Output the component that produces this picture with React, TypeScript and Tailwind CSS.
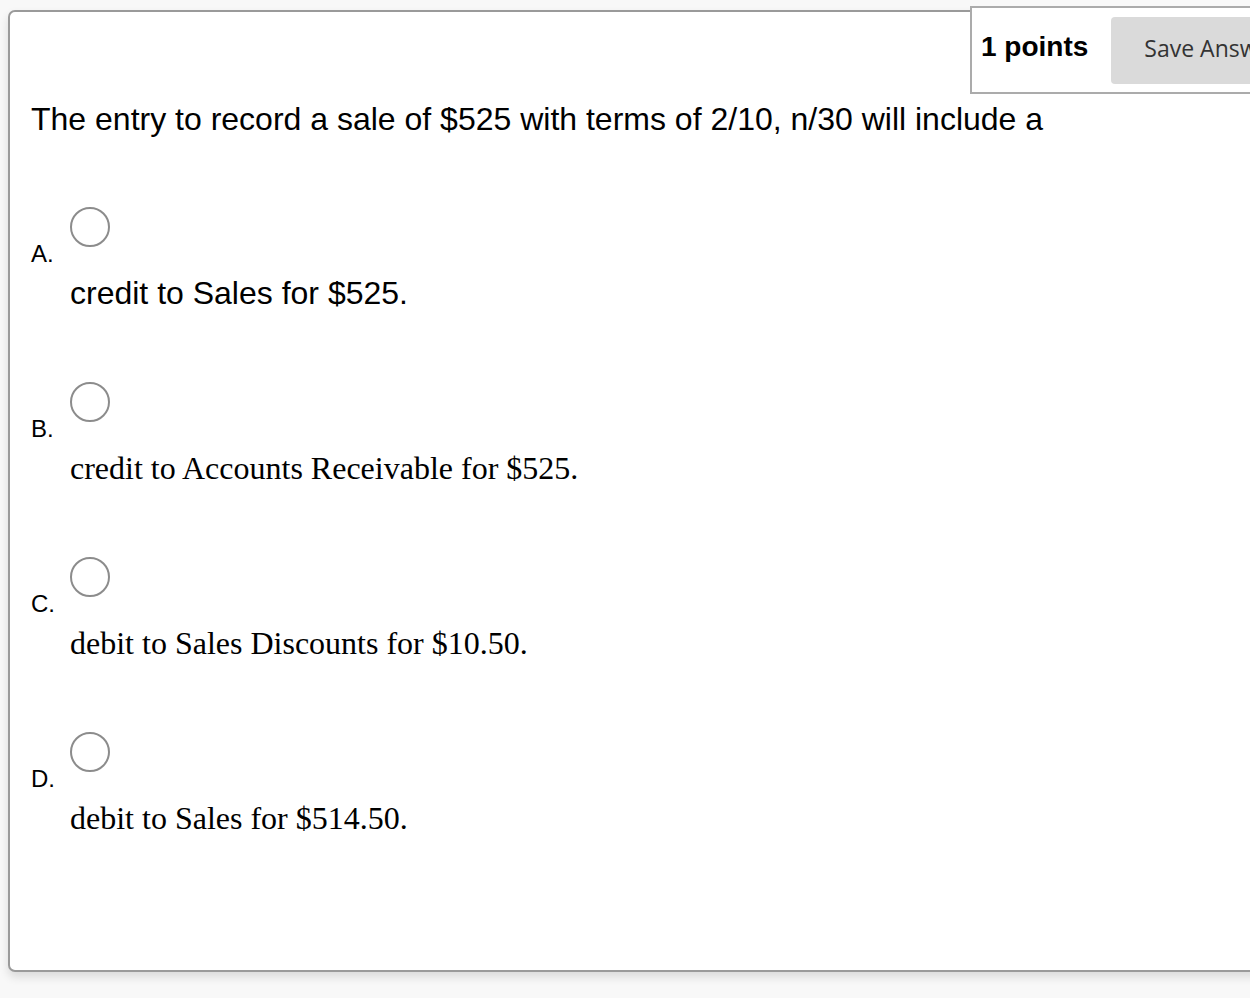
import React from "react";

type Option = {
  letter: string;
  text: string;
  serif?: boolean;
};

const OPTIONS: Option[] = [
  { letter: "A.", text: "credit to Sales for $525." },
  { letter: "B.", text: "credit to Accounts Receivable for $525.", serif: true },
  { letter: "C.", text: "debit to Sales Discounts for $10.50.", serif: true },
  { letter: "D.", text: "debit to Sales for $514.50.", serif: true },
];

function Choice({ option, index }: { option: Option; index: number }) {
  return (
    <div className="h-[175px]">
      <label className="flex cursor-pointer">
        <span className="w-[39px] pt-[35px] text-[24px] leading-[24px] text-black">
          {option.letter}
        </span>
        <input
          type="radio"
          name="answer"
          value={index}
          className="h-[40px] w-[40px] shrink-0 cursor-pointer appearance-none rounded-full border-2 border-[#8c8c8c] bg-white"
        />
      </label>
      <div
        className={
          option.serif
            ? "mt-[9px] pl-[39px] text-[32px] leading-[36px] text-black [font-family:'Liberation_Serif','Times_New_Roman',serif]"
            : "mt-[9px] pl-[39px] text-[32px] leading-[36px] text-black"
        }
      >
        {option.text}
      </div>
    </div>
  );
}

export default function App() {
  return (
    <div className="h-screen w-full overflow-hidden bg-[#f8f8f8] pl-[8px] pt-[10px] [font-family:'Liberation_Sans',Arial,sans-serif]">
      <div className="h-[962px] w-[1400px] rounded-[7px] border-2 border-[#9a9a9a] bg-white shadow-[0_5px_10px_rgba(0,0,0,0.12)]">
        <div className="-mt-[6px] ml-[960px] flex h-[88px] w-[400px] items-center border-2 border-[#ababab] bg-white pl-[9px]">
          <span className="-mt-[6px] text-[28px] font-bold leading-none text-black">1 points</span>
          <button className="ml-[23px] h-[67px] w-[250px] rounded-[4px] bg-[#dadada] pb-[4px] pl-[33px] text-left text-[23px] text-[#333] [font-family:'Open_Sans',sans-serif]">
            Save Answer
          </button>
        </div>

        <div className="pl-[21px]">
          <p className="mt-[7px] text-[32px] leading-[36px] text-black">
            The entry to record a sale of $525 with terms of 2/10, n/30 will include a
          </p>

          <div className="mt-[70px]">
            {OPTIONS.map((o, i) => (
              <Choice key={o.letter} option={o} index={i} />
            ))}
          </div>
        </div>
      </div>
    </div>
  );
}
